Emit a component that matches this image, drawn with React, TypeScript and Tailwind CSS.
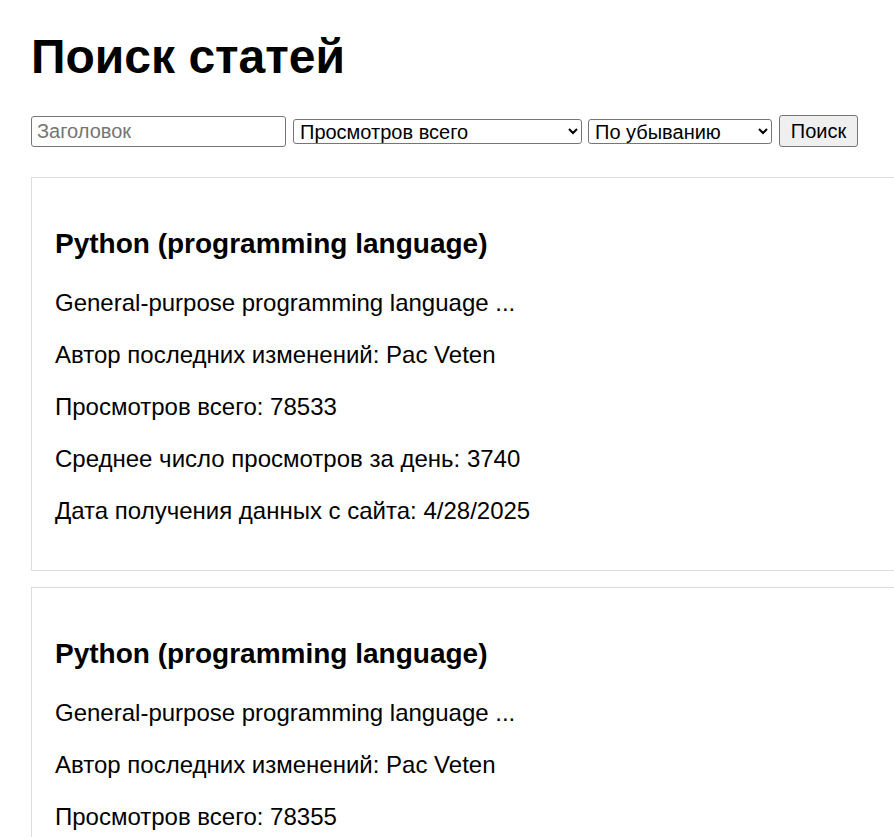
import { useState } from "react";

type Article = {
  title: string;
  description: string;
  author: string;
  views: number;
  avgViews: number;
  date: string;
};

const articles: Article[] = [
  {
    title: "Python (programming language)",
    description: "General-purpose programming language ...",
    author: "Pac Veten",
    views: 78533,
    avgViews: 3740,
    date: "4/28/2025",
  },
  {
    title: "Python (programming language)",
    description: "General-purpose programming language ...",
    author: "Pac Veten",
    views: 78355,
    avgViews: 3731,
    date: "4/27/2025",
  },
  {
    title: "Python (programming language)",
    description: "General-purpose programming language ...",
    author: "Pac Veten",
    views: 78120,
    avgViews: 3720,
    date: "4/26/2025",
  },
];

function ArticleCard({ a }: { a: Article }) {
  return (
    <div className="w-[900px] flex-none border border-[#dddddd] pl-[23px] pr-6 pt-[50px] pb-[45px]">
      <h3 className="text-[28px] leading-[32px] font-bold">{a.title}</h3>
      <div className="mt-[29px] flex flex-col gap-[24px] text-[24px] leading-[28px]">
        <p>{a.description}</p>
        <p>Автор последних изменений: {a.author}</p>
        <p>Просмотров всего: {a.views}</p>
        <p>Среднее число просмотров за день: {a.avgViews}</p>
        <p>Дата получения данных с сайта: {a.date}</p>
      </div>
    </div>
  );
}

export default function App() {
  const [query, setQuery] = useState("");
  const [sortBy, setSortBy] = useState("views");
  const [order, setOrder] = useState("desc");

  return (
    <div className="h-screen w-screen overflow-hidden bg-white text-black font-['Liberation_Sans',Arial,sans-serif]">
      <div className="pl-[31px] pt-[29px]">
        <h1 className="text-[48px] leading-[55px] font-bold">Поиск статей</h1>

        <div className="mt-[31px] flex items-center">
          <input
            value={query}
            onChange={(e) => setQuery(e.target.value)}
            placeholder="Заголовок"
            className="w-[255px] h-[31px] px-[5px] text-[20px] border border-[#767676] rounded-[3px] bg-white placeholder:text-[#757575] outline-none"
          />
          <select
            value={sortBy}
            onChange={(e) => setSortBy(e.target.value)}
            className="ml-[7px] w-[289px] h-[25px] pl-[2px] text-[20px] leading-[23px] border border-[#767676] rounded-[3px] bg-white"
          >
            <option value="views">Просмотров всего</option>
            <option value="avg">Среднее число просмотров за день</option>
            <option value="date">Дата получения данных</option>
          </select>
          <select
            value={order}
            onChange={(e) => setOrder(e.target.value)}
            className="ml-[6px] w-[184px] h-[25px] pl-[2px] text-[20px] leading-[23px] border border-[#767676] rounded-[3px] bg-white"
          >
            <option value="desc">По убыванию</option>
            <option value="asc">По возрастанию</option>
          </select>
          <button className="ml-[7px] w-[79px] h-[32px] text-[20px] border border-[#767676] rounded-[3px] bg-[#efefef]">
            Поиск
          </button>
        </div>

        <div className="mt-[30px] flex flex-col gap-4">
          {articles.map((a, i) => (
            <ArticleCard key={i} a={a} />
          ))}
        </div>
      </div>
    </div>
  );
}
